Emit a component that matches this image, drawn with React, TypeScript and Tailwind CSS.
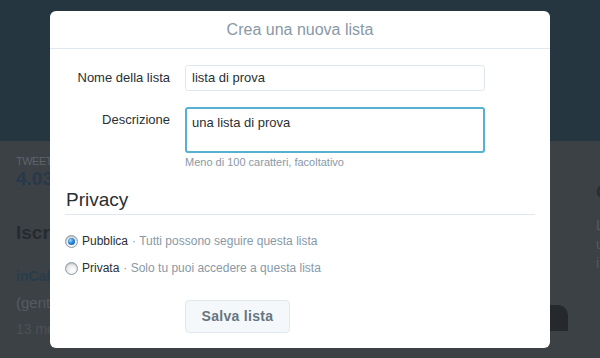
import React from "react";

function Radio({ checked }: { checked?: boolean }) {
  return (
    <span className="relative inline-flex h-[13px] w-[13px] items-center justify-center rounded-full border border-[#8c9aa3] bg-[radial-gradient(circle_at_60%_70%,#ffffff_0%,#e6e8ea_60%,#c9cdd1_100%)] shadow-[inset_0_1px_1px_rgba(0,0,0,0.15)]">
      {checked ? (
        <span className="h-[7px] w-[7px] rounded-full bg-[radial-gradient(circle_at_35%_35%,#9fd6ff_0%,#2a86d6_45%,#0b4f9a_100%)]" />
      ) : null}
    </span>
  );
}

export default function App() {
  return (
    <div className="relative h-[358px] w-[600px] overflow-hidden bg-[#3c4146] font-['Liberation_Sans',Arial,sans-serif]">
      <div className="h-[141px] bg-[#263640]" />
      {/* background page content (dimmed) */}
      <div className="flex flex-col pl-[16px]">
        <div className="mt-[14px] text-[11px] leading-[12px] tracking-[-0.5px] text-[#5c646b]">TWEET</div>
        <div className="mt-[1px] text-[19px] font-bold leading-[22px] text-[#27394a]">4.032</div>
        <div className="mt-[32px] text-[19px] font-bold leading-[22px] text-[#262b2f]">Iscritti</div>
        <div className="mt-[24px] text-[14px] font-bold leading-[16px] text-[#283d4b]">inCalabria</div>
        <div className="mt-[10px] text-[15px] leading-[18px] text-[#555b61]">(gente</div>
        <div className="mt-[9px] text-[14px] leading-[16px] text-[#4b5156]">13 mesi</div>
      </div>
      <div className="absolute left-[596px] top-[178px] text-[19px] font-bold text-[#2a2f33]">C</div>
      <div className="absolute left-[596px] top-[216px] flex flex-col text-[14px] leading-[19px] text-[#555b61]">
        <span>L</span>
        <span>u</span>
        <span>i</span>
      </div>
      <div className="absolute left-[540px] top-[305px] h-[26px] w-[28px] rounded-tr-[10px] bg-[#25292d]" />

      {/* modal */}
      <div className="absolute left-[50px] top-[11px] flex h-[337px] w-[500px] flex-col rounded-[6px] bg-white">
        <div className="flex h-[38px] items-center justify-center border-b border-[#e1e8ed] text-[16px] text-[#8899a6]">
          Crea una nuova lista
        </div>
        <div className="flex flex-col px-[15px]">
          <div className="mt-[16px] flex">
            <div className="w-[105px] pt-[5px] text-right text-[13px] leading-[15px] text-[#292f33]">Nome della lista</div>
            <div className="ml-[15px] flex h-[26px] w-[300px] items-center rounded-[3px] border border-[#e1e8ed] px-[6px] text-[13px] text-[#292f33]">
              lista di prova
            </div>
          </div>
          <div className="mt-[16px] flex">
            <div className="w-[105px] pt-[5px] text-right text-[13px] leading-[15px] text-[#292f33]">Descrizione</div>
            <div className="ml-[15px] flex flex-col">
              <div className="h-[46px] w-[300px] rounded-[3px] border-2 border-[#56b0cf] px-[5px] pt-[6px] text-[13px] leading-[15px] text-[#292f33]">
                una lista di prova
              </div>
              <div className="mt-[3px] text-[11px] leading-[13px] text-[#8899a6]">Meno di 100 caratteri, facoltativo</div>
            </div>
          </div>
          <div className="mt-[20px] border-b border-[#e1e8ed] pb-[3px] pl-[1px] text-[19px] leading-[22px] text-[#292f33]">
            Privacy
          </div>
          <div className="mt-[19px] flex items-center gap-[4px] text-[12px] leading-[14px]">
            <Radio checked />
            <span className="text-[#292f33]">Pubblica</span>
            <span className="text-[#8899a6]">· Tutti possono seguire questa lista</span>
          </div>
          <div className="mt-[13px] flex items-center gap-[4px] text-[12px] leading-[14px]">
            <Radio />
            <span className="text-[#292f33]">Privata</span>
            <span className="text-[#8899a6]">· Solo tu puoi accedere a questa lista</span>
          </div>
          <div className="ml-[120px] mt-[25px]">
            <div className="flex h-[33px] w-[105px] items-center justify-center rounded-[4px] border border-[#e1e8ed] bg-[#f5f8fa] text-[14px] font-bold tracking-[0.3px] text-[#66757f]">
              Salva lista
            </div>
          </div>
        </div>
      </div>
    </div>
  );
}
